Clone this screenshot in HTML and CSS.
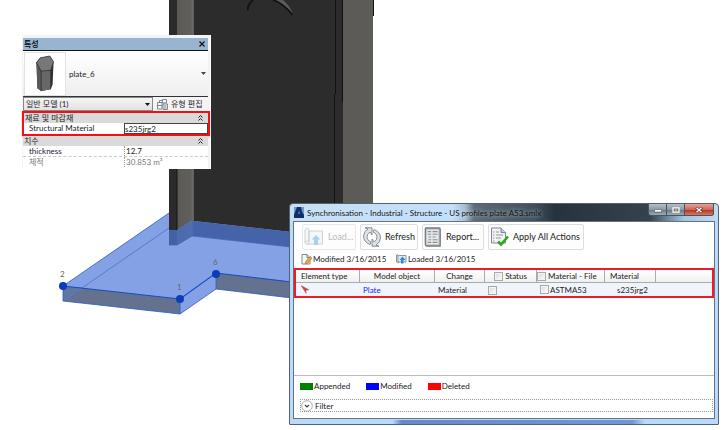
FILE: index.html
```html
<!DOCTYPE html>
<html lang="en">
<head>
<meta charset="utf-8">
<title>Synchronisation</title>
<link rel="stylesheet" href="styles.css">
</head>
<body>
<main class="desktop">
  <svg class="scene" width="728" height="430" viewBox="0 0 728 430" aria-hidden="true">
    <defs>
      <linearGradient id="flange" x1="0" x2="1" y1="0" y2="0">
        <stop offset="0" stop-color="#5a5956"/><stop offset=".75" stop-color="#605f5c"/>
        <stop offset=".9" stop-color="#6b6a69"/><stop offset="1" stop-color="#333"/>
      </linearGradient>
      <linearGradient id="flangeTint" x1="0" x2="1" y1="0" y2="0">
        <stop offset="0" stop-color="#4a69ae"/><stop offset=".85" stop-color="#4f6eb1"/><stop offset="1" stop-color="#4563a6"/>
      </linearGradient>
    </defs>
    <path d="M63 286 169 213H289V282L216 273 180 299Z" fill="#84a1e5"/>
    <path d="M63 286 180 299V314L63 301Z" fill="#64718f"/>
    <path d="M63 286 85 288 63 301Z" fill="#61779f"/>
    <path d="M180 299 216 273V289L180 314Z" fill="#84a1e5"/>
    <path d="M216 273 300 283V299L216 289Z" fill="#64718f"/>
    <path d="M63 301 169 228" fill="none" stroke="#567bd2" stroke-width="1"/>
    <path d="M169 213 63 286V301L180 314 216 289 300 299M180 299V314M216 273V289" fill="none" stroke="#2e5cc7" stroke-width=".8"/>
    <path d="M63 286 180 299 216 273 300 283" fill="none" stroke="#1749bb" stroke-width="1.1"/>
    <path d="M169 0H178V230H169Z" fill="#2b2b2b"/>
    <path d="M177 0H195V221H192L177 230Z" fill="url(#flange)"/>
    <path d="M194 0H344V238L194 221Z" fill="#2c2c2c"/>
    <path d="M343 0H373V240H343Z" fill="#5c5b58"/>
    <path d="M373.500 0V16M335.500 0V94L334.500 95V204M342.500 0V102" fill="none" stroke="#111" stroke-width="1"/>
    <path d="M177 168V230" stroke="#151515"/>
    <path d="M169 230H177V245H169Z" fill="#4361a5"/>
    <path d="M177 230 192 221H194V236H192L177 245Z" fill="url(#flangeTint)"/>
    <path d="M194 221 300 233V248L194 236Z" fill="#4563a8"/>
    <path d="M169 245H177L192 236 300 248" fill="none" stroke="#3c60b0" stroke-width=".7"/>
    <path d="M274 0H283Q290 6 293 14 286 5 274 0Z" fill="#5c5b58"/>
    <path d="M248 10Q247 5 253 0M273 0Q283 3 292.500 15" fill="none" stroke="#111" stroke-width="1.800"/>
    <g fill="#0b3cba"><circle cx="63" cy="286" r="4"/><circle cx="180" cy="299" r="4"/><circle cx="216" cy="274" r="4"/></g>
    <g class="node-label"><text x="60" y="277">2</text><text x="177" y="290">1</text><text x="213" y="265">6</text></g>
  </svg>

  <section class="props" aria-label="특성">
    <header class="props-title"><span>특성</span><button class="plain" type="button" aria-label="Close">
      <svg width="6" height="6" viewBox="0 0 6 6"><path d="M.5.5l5 5m0-5l-5 5" stroke="#111" stroke-width="1.2"/></svg></button></header>
    <div class="props-type">
      <div class="thumb"><svg width="38" height="40" viewBox="0 0 40 40">
        <path d="M11 8 15 3 25 1 29 7 28 31 26 36 16 38 12 35Z" fill="#333"/>
        <path d="M11 8 15 3 25 1 29 7 26 16 16 17Z" fill="#777"/>
        <path d="M11 8 16 17V38L12 35Z" fill="#595959"/><path d="M16 17 26 16V36L16 38Z" fill="#676767"/>
        <path d="M11 8 15 3 25 1 29 7 26 16 16 17ZM16 17V38M26 16V36" fill="none" stroke="#222" stroke-width=".6"/>
      </svg></div>
      <span class="type-name">plate_6</span>
      <button class="plain" type="button" aria-label="Choose type"><svg width="5" height="3" viewBox="0 0 5 3"><path d="M0 0H5L2.500 3Z" fill="#444"/></svg></button>
    </div>
    <div class="props-filter">
      <div class="select-wrap"><select aria-label="Category"><option>일반 모델 (1)</option></select>
        <svg class="select-arrow" width="5" height="3" viewBox="0 0 5 3"><path d="M0 0H5L2.500 3Z" fill="#111"/></svg></div>
      <button class="plain edit-type" type="button"><svg width="11" height="11" viewBox="0 0 11 11" fill="none" stroke="#66717d" stroke-width=".8"><path d="M.5 3.500H5V10H.5ZM5.500.5H9.500V4H5.500ZM6 5H10.500V10.500H6ZM.5 6.500H5M2.500 3.500V1.500H5M7 7H9.500M7 9H9.500"/></svg>유형 편집</button>
    </div>
    <div class="props-group highlight">
      <h2>재료 및 마감재<svg width="5" height="6" viewBox="0 0 5 6"><path d="M.5 2.500l2-2 2 2m-4 3l2-2 2 2" fill="none" stroke="#222"/></svg></h2>
      <div class="prop"><label for="mat">Structural Material</label><input id="mat" class="boxed" value="s235jrg2"></div>
    </div>
    <div class="props-group">
      <h2>치수<svg width="5" height="6" viewBox="0 0 5 6"><path d="M.5 2.500l2-2 2 2m-4 3l2-2 2 2" fill="none" stroke="#222"/></svg></h2>
      <div class="prop"><label for="thick">thickness</label><input id="thick" value="12.7"></div>
      <div class="prop readonly"><label for="vol">체적</label><input id="vol" value="30.853 m³" readonly></div>
    </div>
  </section>

  <section class="sync" aria-label="Synchronisation">
    <header class="sync-title">
      <svg width="10" height="11" viewBox="0 0 10 11"><path d="M0 0H10V11H0Z" fill="#6f98cf"/><path d="M0 11V8L3 0H7L8 5 10 8V11Z" fill="#112d68"/><path d="M4 7 5 3 6 7Z" fill="#5b82ba"/></svg>
      <h1>Synchronisation - Industrial - Structure - US profiles plate A53.smlx</h1>
      <div class="caption">
        <button type="button" aria-label="Minimize"><svg width="8" height="6" viewBox="0 0 8 6"><path d="M.5 2.500H7.500V5H.5Z" fill="#fff" stroke="#555" stroke-width=".6"/></svg></button>
        <button type="button" aria-label="Maximize"><svg width="8" height="6" viewBox="0 0 8 6"><path d="M1 .8H7V5.200H1Z" fill="#777" stroke="#fff" stroke-width="1.200"/><path d="M3 2.500H5V3.500H3Z" fill="#ddd"/></svg></button>
        <button class="close" type="button" aria-label="Close"><svg width="8" height="6" viewBox="0 0 8 6"><path d="M1 .5 7 5.500M7 .5 1 5.500" stroke="#6e2b22" stroke-width="2.600"/><path d="M1.500 .8 6.500 5.200M6.500 .8 1.500 5.200" stroke="#fff" stroke-width="1.500"/></svg></button>
      </div>
    </header>
    <div class="client">
      <div class="toolbar">
        <button type="button" class="load" disabled><svg width="20" height="20" viewBox="0 0 20 20" fill="none"><path d="M5 4H18.500V17H3M5 4V14M1 2.500Q3-.5 5 2.500V14H3.500Q1 14 1 16ZM1 15Q2 19 5 17V14" fill="#f5f6f6" stroke="#cfd3d5"/><path d="M12 8 16.500 12.500H14V18H10V12.500H7.500Z" fill="#a7d2f4"/></svg>Load...</button>
        <button type="button" class="refresh"><svg width="20" height="20" viewBox="0 0 20 20"><g fill="#e0e3e6" stroke="#7d858c" stroke-width=".9"><path d="M8 17.500Q1.500 15 1.500 9 2 4 6 2L3 .8H10V8L8 5Q4.500 7 5 10.500 5.500 14 9 15Z"/><path d="M12 2.500Q18.500 5 18.500 11 18 16 14 18L17 19.200H10V12L12 15Q15.500 13 15 9.500 14.500 6 11 5Z"/></g></svg>Refresh</button>
        <button type="button" class="report"><svg width="18" height="22" viewBox="0 0 20 22"><path d="M2 1H17Q18 1 18 3V21H3Q1.500 21 1.500 19V2Z" fill="#bfc3c6" stroke="#767c81" stroke-width="1.500"/><path d="M3 3H16V19H3Z" fill="#e7e9ea"/><path d="M4 5H8M9.500 5H15M4 8H8M9.500 8H15M5 11H8M9.500 11H13M5 14H8M9.500 14H15M4 17H8M9.500 17H15" stroke="#8a9095" stroke-width="1.200"/></svg>Report...</button>
        <button type="button" class="apply"><svg width="20" height="20" viewBox="0 0 20 20"><path d="M1.500 1H11L15.500 5.500V16H1.500Z" fill="#f2f3f4" stroke="#7f878e"/><path d="M11 1V5.500H15.500" fill="#c8ccd0" stroke="#7f878e"/><path d="M3 5H4.500M6 5H9M3 8H4.500M6 8H13M3 11H4.500M6 11H11M3 14H4.500" stroke="#9299a0"/><path d="M8 14.500 11 17.500 18 9.500" fill="none" stroke="#37a321" stroke-width="2.600"/></svg>Apply All Actions</button>
      </div>
      <div class="dates">
        <span class="stamp modified"><svg width="11" height="11" viewBox="0 0 11 11"><path d="M1 .5H6L9 3.500V10H1Z" fill="#f4f6f8" stroke="#747f88" stroke-width=".9"/><path d="M6 .5V3.500H9" fill="none" stroke="#747f88"/><path d="M4 10 5 7 9 2.500 11 4 7 9Z" fill="#efa53b" stroke="#9b631e" stroke-width=".5"/></svg>Modified 3/16/2015</span>
        <span class="stamp"><svg width="11" height="10" viewBox="0 0 11 10"><path d="M2.500 1.500H10V8H2V1Q1 0 .5 1V8Q1 9.500 3 8" fill="#e4eaf0" stroke="#717d88" stroke-width=".8"/><path d="M6.500 2.500 9.500 6H7.500V9.500H5V6H3.500Z" fill="#258add"/></svg>Loaded 3/16/2015</span>
      </div>
      <div class="grid">
        <table>
          <colgroup><col class="c-type"><col class="c-object"><col class="c-change"><col class="c-status"><col class="c-file"><col class="c-material"><col></colgroup>
          <thead><tr><th>Element type</th><th class="center">Model object</th><th class="center">Change</th>
            <th class="center"><label><input type="checkbox">Status</label></th>
            <th><label><input type="checkbox">Material - File</label></th>
            <th>Material</th><th aria-label="Empty"></th></tr></thead>
          <tbody><tr><td class="kind"><svg width="9" height="9" viewBox="0 0 9 9"><path d="M0 .5 8 4.800 5 5.200 5.200 8.500Z" fill="#c6474f" stroke="#c6474f" stroke-width=".4"/></svg></td>
            <td class="object">Plate</td><td class="change">Material</td>
            <td class="status"><label><input type="checkbox" aria-label="Status of Plate"></label></td>
            <td class="file"><label><input type="checkbox">ASTMA53</label></td>
            <td class="value">s235jrg2</td><td></td></tr></tbody>
        </table>
      </div>
      <footer class="sync-foot">
        <ul class="legend"><li class="appended">Appended</li><li class="changed">Modified</li><li class="deleted">Deleted</li></ul>
        <button class="filter" type="button"><svg width="12" height="12" viewBox="0 0 12 12" fill="none"><circle cx="6" cy="6" r="5.300" fill="#fff" stroke="#999" stroke-width=".8"/><path d="M4 5 6 7 8 5" stroke="#444" stroke-width="1.200"/></svg>Filter</button>
      </footer>
    </div>
  </section>
</main>
</body>
</html>
```
FILE: styles.css
```css
* { box-sizing: border-box; }
body {
  margin: 0;
  background: #fff;
  color: #222;
  font: 8px/10px Lato, "Noto Sans CJK KR", sans-serif;
}
button, input, select { font: inherit; color: inherit; margin: 0; }
h1, h2, ul { margin: 0; padding: 0; font: inherit; }
svg { display: block; flex: none; }

.desktop { position: relative; min-height: 100vh; overflow: hidden; }
.scene { position: absolute; left: 0; top: 0; }
.node-label { fill: #666; }
.plain { display: flex; align-items: center; padding: 0; border: 0; background: none; }

/* Properties palette */
.props {
  position: absolute;
  left: 21px;
  top: 35px;
  width: 190px;
  padding: 3px 2px 0 1px;
  background: #f4f4f4;
  border: 1px solid #fff;
  border-top: 0;
}
.props-title {
  display: flex;
  align-items: center;
  justify-content: space-between;
  height: 13px;
  padding: 0 3px 0 1px;
  background: #99b4d1;
  border-bottom: 1px solid #111;
  font-weight: 500;
  color: #000;
}
.props-type {
  display: flex;
  align-items: center;
  height: 46px;
  padding-right: 2px;
  background: linear-gradient(#fff, #eee);
  border-bottom: 1px solid #333;
}
.thumb { width: 42px; margin-left: 1px; padding: 1px; border: 1px solid #e2e2e2; background: #fff; }
.type-name { flex: 1; padding-left: 3px; }
.props-filter { display: flex; height: 14px; gap: 4px; }
.select-wrap { position: relative; width: 130px; }
.select-wrap select {
  width: 100%;
  height: 14px;
  padding: 0 2px;
  appearance: none;
  border: 1px solid #888;
  border-radius: 0;
  background: linear-gradient(#f5f5f5, #e2e2e2);
}
.select-arrow { position: absolute; right: 3px; top: 6px; pointer-events: none; }
.edit-type { gap: 3px; white-space: nowrap; }
.props-group h2 {
  display: flex;
  align-items: center;
  justify-content: space-between;
  height: 10px;
  padding: 0 5px 0 1px;
  background: #dadada;
}
.highlight {
  margin: 0 -2px 0 -1px;
  border: 2px solid #ee1118;
  box-shadow: 0 1px 2px #7775;
}
.prop {
  display: grid;
  grid-template-columns: 101px 1fr;
  height: 11px;
  background: #fff;
  border-bottom: 1px dashed #ccc;
}
.prop label { padding-left: 6px; color: #223; }
.prop input {
  width: 100%;
  height: 10px;
  padding: 0 1px;
  border: 0;
  border-left: 1px dotted #999;
  border-radius: 0;
  background: none;
  outline: 0;
}
.highlight .prop { border: 0; grid-template-columns: 100px 1fr; }
.highlight .prop label { padding-left: 5px; }
.prop .boxed { border: 1px solid #444; height: 11px; padding: 0; }
.prop.readonly, .prop.readonly label { color: #777; }
.prop.readonly { border: 0; }

/* Synchronisation window */
.sync {
  position: absolute;
  left: 289px;
  right: 9px;
  top: 203px;
  padding: 0 3px 5px;
  border: 1px solid #56616b;
  border-radius: 4px 4px 1px 1px;
  background:
    linear-gradient(90deg, transparent 24%, #6389cb 26%, #6f96d6 80%, transparent 83%) bottom / 100% 4px no-repeat,
    linear-gradient(90deg, #c5dff6 0, #c2dffb 38%, #a5bdd2 41%, #5c6b77 43%, #40505d 57%, #26323c 62%, #35424c 84%, #a4c3df 92%, #c2ddf4 100%) top / 100% 18px no-repeat,
    #b9dafa;
}
.sync-title { display: flex; align-items: flex-start; height: 17px; padding: 0 1px; gap: 3px; }
.sync-title > svg { margin-top: 3px; }
.sync-title h1 {
  flex: 1;
  margin-top: 4px;
  white-space: nowrap;
  color: #111;
  text-shadow: 0 0 4px #fff9, 0 0 6px #fff6;
}
.caption { display: flex; }
.caption button {
  display: flex;
  align-items: center;
  justify-content: center;
  width: 18px;
  height: 12px;
  padding: 0;
  border: 1px solid #48545e;
  border-top: 0;
  border-right: 0;
  background: linear-gradient(#b4bfc7, #8c9aa4 50%, #66747f 51%, #9dabb5);
}
.caption button:first-child { border-radius: 0 0 0 3px; }
.caption .close {
  width: 30px;
  border-right: 1px solid #48545e;
  border-radius: 0 0 3px 0;
  background: linear-gradient(#e3a295, #ce6753 50%, #b62e1b 51%, #d77861);
}
.client { background: #fff; border: 1px solid #66727d; }

.toolbar { display: flex; gap: 4px; padding: 2px 8px 0; }
.toolbar button {
  display: flex;
  align-items: center;
  height: 26px;
  padding: 0 2px 0 1px;
  gap: 3px;
  border: 1px solid #ddd;
  border-radius: 2px;
  background: #fdfdfd;
  font-size: 9px;
  white-space: nowrap;
}
.toolbar .load { width: 54px; color: #bbb; border-color: #e8e8e8; }
.toolbar .refresh { width: 58px; }
.toolbar .report { width: 62px; }
.toolbar .report, .toolbar .load { gap: 4px; }
.toolbar .apply { width: 96px; }

.dates { display: flex; height: 18px; padding-left: 7px; }
.stamp { display: flex; align-items: center; gap: 1px; white-space: nowrap; }
.stamp.modified { width: 95px; }

.grid { height: 108px; border-bottom: 1px solid #bbb; }
.grid table {
  width: 100%;
  table-layout: fixed;
  border-collapse: separate;
  border-spacing: 0;
  border: 2px solid #ee1c25;
}
.c-type { width: 64px; }
.c-object { width: 75px; }
.c-change { width: 50px; }
.c-status { width: 52px; }
.c-file { width: 68px; }
.c-material { width: 51px; }
.grid th {
  height: 13px;
  padding: 0 0 0 5px;
  font-weight: 400;
  text-align: left;
  white-space: nowrap;
  background: linear-gradient(#fff, #f0f0f0);
  border-right: 1px solid #aaa;
  border-bottom: 1px solid #aaa;
}
.grid th:last-child { border-right: 0; }
.grid th.center { padding: 0; text-align: center; }
.grid th:nth-child(5) { padding-left: 0; }
.grid td { height: 13px; padding: 0; white-space: nowrap; background: #f0f5fc; }
.grid label { display: inline-flex; align-items: center; gap: 2px; vertical-align: middle; }
.grid input {
  width: 9px;
  height: 9px;
  appearance: none;
  border: 1px solid #aaa;
  background: linear-gradient(135deg, #d5d8da, #fff);
  outline: 1px solid #f4f4f4;
  outline-offset: -2px;
}
.grid td.kind { padding-left: 5px; }
.grid td.object { padding-left: 3px; color: #1a1aff; }
.grid td.change { padding-left: 3px; }
.grid td.status { padding-left: 3px; }
.grid td.file { padding-left: 3px; }
.grid td.value { padding-left: 12px; }
.grid td.file label { gap: 1px; }

.sync-foot { padding: 5px 1px 6px 6px; }
.legend { display: flex; list-style: none; gap: 16px; }
.legend li { display: flex; align-items: center; gap: 1px; }
.legend li::before { content: ""; width: 13px; height: 7px; background: var(--swatch); }
.appended { --swatch: #008000; }
.changed { --swatch: #00f; }
.deleted { --swatch: #f00; }
.filter {
  display: flex;
  align-items: center;
  width: 100%;
  height: 13px;
  margin-top: 8px;
  padding: 0;
  gap: 2px;
  border: 1px dotted #999;
  background: none;
}
```
